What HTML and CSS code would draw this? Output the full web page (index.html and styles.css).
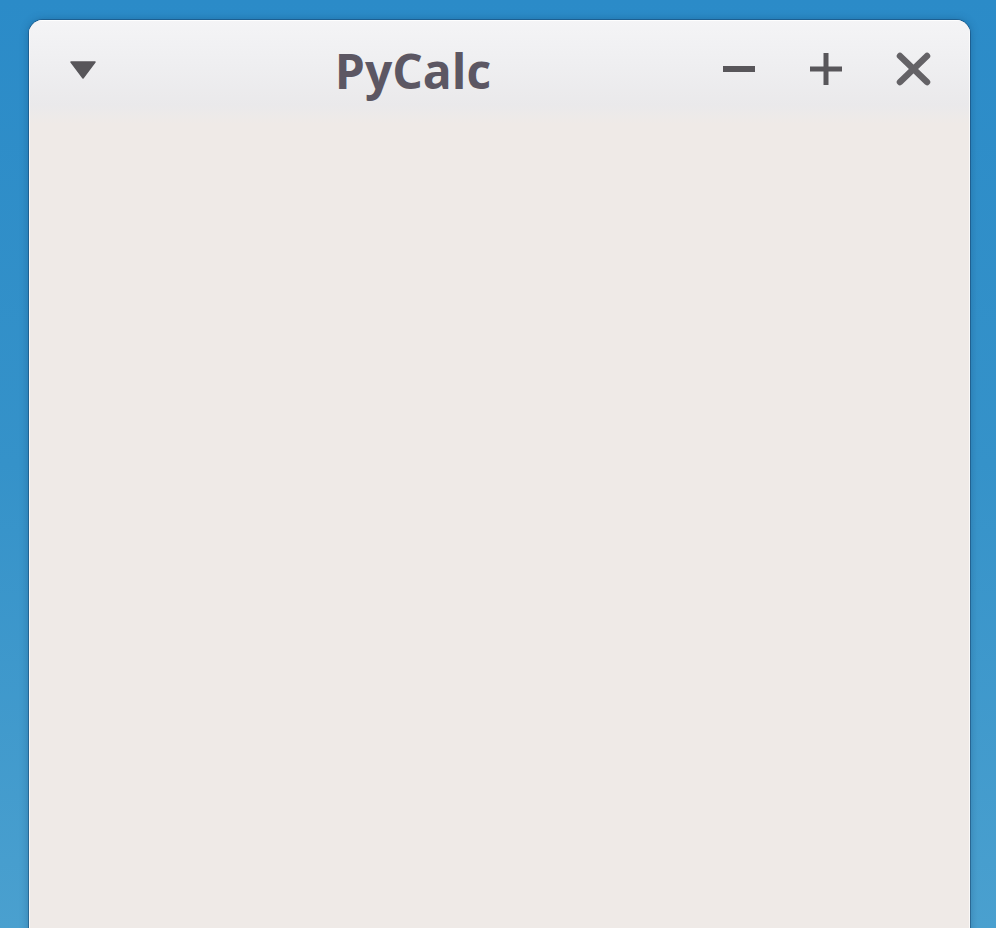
FILE: index.html
```html
<!DOCTYPE html>
<html>
<head>
<meta charset="utf-8">
<title>PyCalc</title>
<link rel="stylesheet" href="styles.css">
</head>
<body>
<div class="window">
  <div class="titlebar">
    <svg class="menu" width="26" height="18" viewBox="0 0 26 18"><path d="M1 1 H25 L13 17 Z" fill="#58565a" stroke="#58565a" stroke-width="1.5" stroke-linejoin="round"/></svg>
    <div class="title">PyCalc</div>
    <div class="controls">
      <svg width="34" height="34" viewBox="0 0 34 34"><line x1="1" y1="17" x2="33" y2="17" stroke="#58565a" stroke-width="6"/></svg>
      <svg width="34" height="34" viewBox="0 0 34 34"><line x1="1" y1="17" x2="33" y2="17" stroke="#58565a" stroke-width="5"/><line x1="17" y1="1" x2="17" y2="33" stroke="#58565a" stroke-width="5"/></svg>
      <svg width="35" height="34" viewBox="0 0 35 34"><line x1="4" y1="4" x2="31" y2="30" stroke="#646266" stroke-width="6.5" stroke-linecap="round"/><line x1="31" y1="4" x2="4" y2="30" stroke="#646266" stroke-width="6.5" stroke-linecap="round"/></svg>
    </div>
  </div>
  <div class="content"></div>
</div>
</body>
</html>
```

FILE: styles.css
```css
html, body {
  margin: 0;
  height: 100%;
  overflow: hidden;
}
body {
  background: linear-gradient(180deg, #2b8bc8 0%, #3592c9 50%, #4aa0cf 100%);
  padding: 20px 26px 0 29px;
  box-sizing: border-box;
  font-family: "Open Sans", "Noto Sans", sans-serif;
}
.window {
  height: calc(100% + 20px);
  background: #efeae7;
  border-radius: 14px 14px 0 0;
  box-shadow: 0 0 0 1px rgba(20, 60, 100, 0.45), 0 0 8px rgba(10, 50, 90, 0.35);
  display: flex;
  flex-direction: column;
  overflow: hidden;
}
.titlebar {
  height: 104px;
  flex: none;
  display: flex;
  align-items: center;
  padding: 0 39px 0 41px;
  box-sizing: border-box;
  padding-bottom: 6px;
  background: linear-gradient(180deg, #f4f4f6 0%, #efeff1 40%, #eae9eb 82%, #edeae9 92%, #efeae7 100%);
  box-shadow: inset 0 1px 0 rgba(255,255,255,0.9), inset 1px 0 0 rgba(255,255,255,0.7), inset -1px 0 0 rgba(255,255,255,0.7);
}
.menu {
  flex: none;
  margin-top: 2px;
}
.title {
  flex: 1;
  margin-left: 8px;
  text-align: center;
  font-weight: 700;
  font-size: 48px;
  color: #5c5763;
  line-height: 1;
  margin-top: 4px;
}
.controls {
  display: flex;
  gap: 53px;
  align-items: center;
}
.controls svg {
  display: block;
}
.content {
  flex: 1;
  background: #efeae7;
  box-shadow: inset 1px 0 0 rgba(255,255,255,0.7), inset -1px 0 0 rgba(255,255,255,0.7);
}
```
